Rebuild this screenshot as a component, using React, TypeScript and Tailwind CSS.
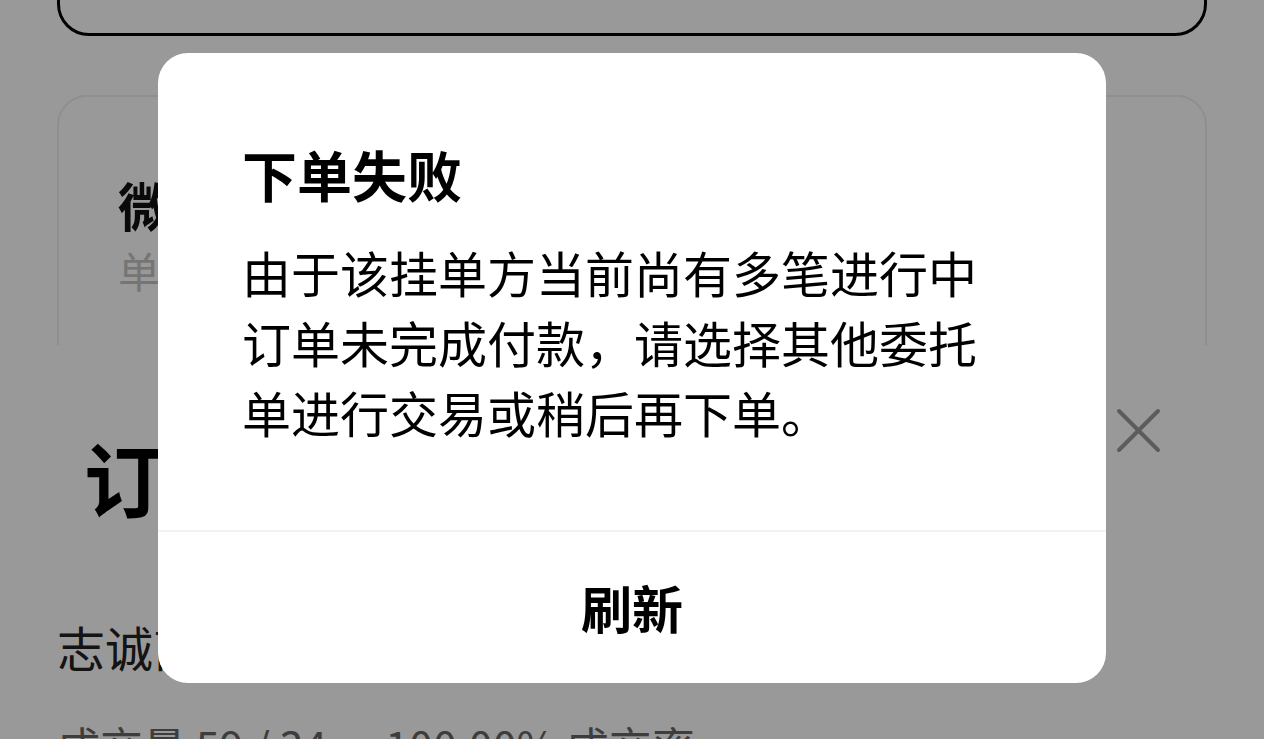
const font = { fontFamily: '"Noto Sans CJK SC", "Noto Sans", sans-serif' };

function CloseIcon() {
	return (
		<svg width="45" height="45" viewBox="0 0 45 45" fill="none" aria-hidden="true">
			<path d="M3 3L42 42M42 3L3 42" stroke="#9a9a9a" strokeWidth="4" strokeLinecap="round" />
		</svg>
	);
}

function OrderPage() {
	return (
		<div className="min-h-screen overflow-hidden bg-white px-[57px]">
			<div className="-mt-[64px] h-[100px] rounded-[32px] border-[3px] border-black" />

			<div className="mt-[59px] h-[250px] overflow-hidden">
				<div className="h-[400px] rounded-[30px] border-2 border-[#eeeeee] px-[59px] pt-[82px]">
					<div className="font-bold text-[52px] text-[#111] leading-none">微信支付</div>
					<div className="mt-[18px] text-[42px] text-[#c4c4c4] leading-none">单笔限额</div>
				</div>
			</div>

			<div className="mt-[63px] flex items-start justify-between pr-[46px] pl-[27px]">
				<div className="mt-[28px] font-bold text-[80px] text-black leading-none">订单确认</div>
				<CloseIcon />
			</div>

			<div className="mt-[106px] text-[48px] text-[#222] leading-none">志诚商户</div>
			<div className="mt-[54px] flex gap-[58px] text-[43px] text-[#666] leading-none">
				<span>成交量 59 / 34</span>
				<span>100.00% 成交率</span>
			</div>
		</div>
	);
}

function FailDialog() {
	return (
		<div className="fixed inset-0 flex items-center justify-center bg-black/40 pb-[4px]">
			<div className="w-[948px] overflow-hidden rounded-[30px] bg-white">
				<div className="pt-[93px] pb-[83px] pl-[84px]">
					<h2 className="font-bold text-[55px] text-black leading-none">下单失败</h2>
					<p className="mt-[36px] w-[750px] text-[49px] text-black leading-[70px]">
						由于该挂单方当前尚有多笔进行中订单未完成付款，请选择其他委托单进行交易或稍后再下单。
					</p>
				</div>
				<button
					type="button"
					className="flex h-[153px] w-full items-center justify-center border-[#f2f2f2] border-t-2 font-bold text-[51px] text-black leading-none"
				>
					刷新
				</button>
			</div>
		</div>
	);
}

export default function App() {
	return (
		<div style={font}>
			<OrderPage />
			<FailDialog />
		</div>
	);
}
